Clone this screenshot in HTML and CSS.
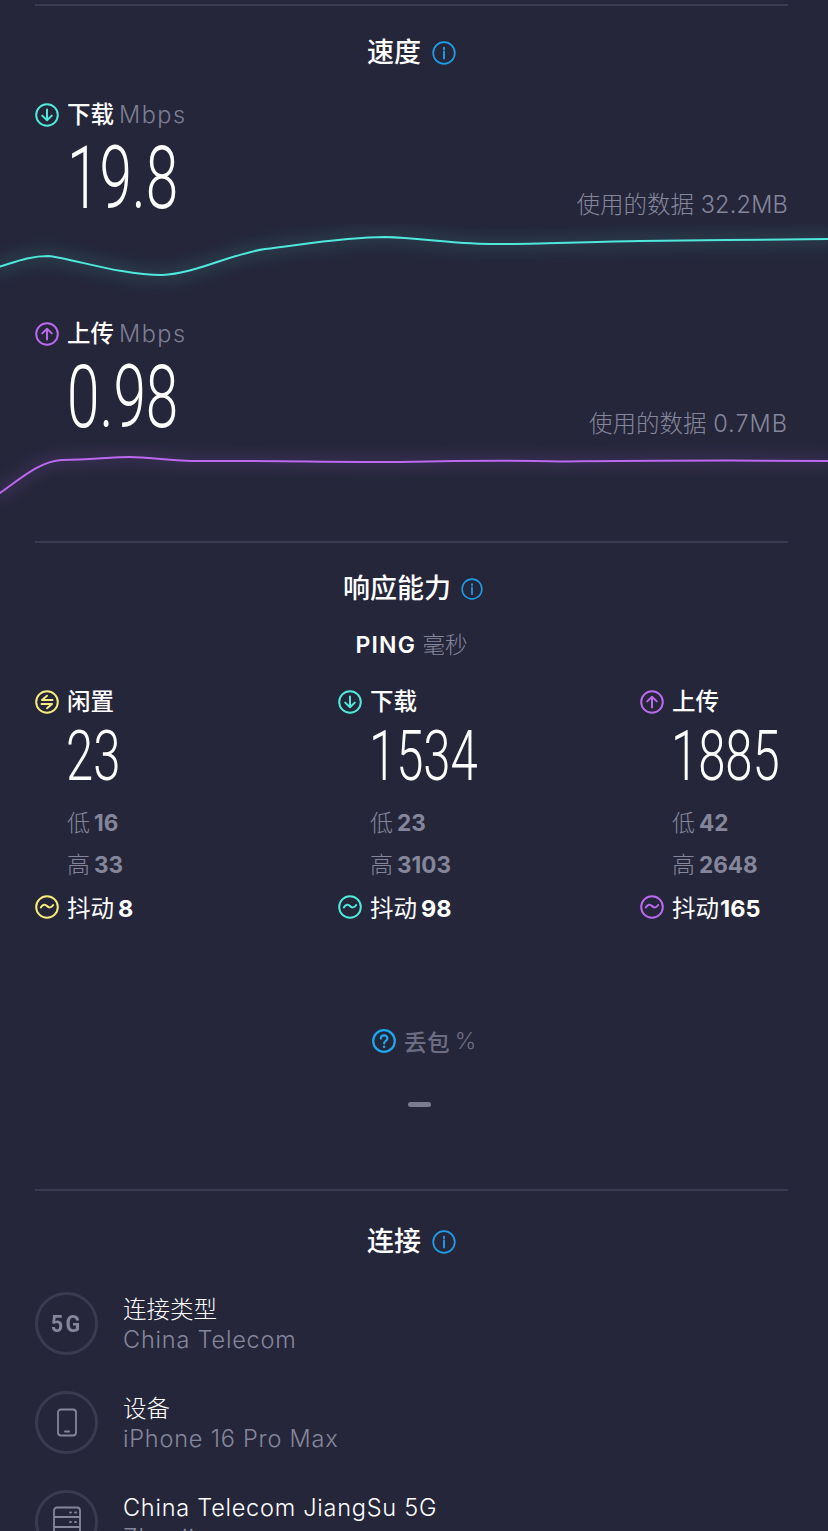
FILE: index.html
```html
<!DOCTYPE html>
<html lang="zh">
<head>
<meta charset="utf-8">
<title>速度</title>
<link rel="stylesheet" href="styles.css">
</head>
<body>
<main class="page">
  <section class="speed">
    <hr class="rule">
    <h2 class="title"><span>速度</span>
      <svg class="ico" viewBox="0 0 24 24"><circle cx="12" cy="12" r="10.800" class="s-blue"/><path d="M12 10.500v7M12 6.600v1.600" class="s-blue t"/></svg>
    </h2>
    <div class="metric">
      <div class="label">
        <svg class="ico" viewBox="0 0 24 24"><circle cx="12" cy="12" r="10.800" class="s-cyan"/><path d="M12 6.500v10.500M7.200 12.600 12 17.200l4.800-4.600" class="s-cyan"/></svg>
        <b>下载</b><span class="unit">Mbps</span>
      </div>
      <div class="figure-row">
        <div class="big"><span>19.8</span></div>
        <div class="used">使用的数据 <span class="lat">32.2MB</span></div>
      </div>
    </div>
    <svg class="chart" viewBox="0 0 828 70" preserveAspectRatio="none">
      <defs>
        <filter id="glow" x="-5%" y="-100%" width="110%" height="300%"><feGaussianBlur stdDeviation="7"/></filter>
      </defs>
      <path class="glow-c" filter="url(#glow)" d="M0 42.500C15 38 30 32 48 32C75 35 120 51 162 51C195 50 230 30 265 25C300 21 345 13 385 13C420 14 450 19.500 490 20C540 20.500 590 17.500 640 17C700 16.500 770 15.500 828 15"/>
      <path class="line-c" d="M0 42.500C15 38 30 32 48 32C75 35 120 51 162 51C195 50 230 30 265 25C300 21 345 13 385 13C420 14 450 19.500 490 20C540 20.500 590 17.500 640 17C700 16.500 770 15.500 828 15"/>
    </svg>
    <div class="metric metric-up">
      <div class="label">
        <svg class="ico" viewBox="0 0 24 24"><circle cx="12" cy="12" r="10.800" class="s-purple"/><path d="M12 17.500V7M7.200 11.400 12 6.800l4.800 4.600" class="s-purple"/></svg>
        <b>上传</b><span class="unit">Mbps</span>
      </div>
      <div class="figure-row">
        <div class="big"><span>0.98</span></div>
        <div class="used">使用的数据 <span class="lat lat-wide">0.7MB</span></div>
      </div>
    </div>
    <svg class="chart" viewBox="0 0 828 70" preserveAspectRatio="none">
      <path class="glow-p" filter="url(#glow)" d="M0 50C20 36 40 18 62 17C90 17 110 14 130 14C150 14 170 18 200 18C260 17.500 330 19 400 19C450 18 500 17 560 18.500C620 18 700 17 828 18"/>
      <path class="line-p" d="M0 50C20 36 40 18 62 17C90 17 110 14 130 14C150 14 170 18 200 18C260 17.500 330 19 400 19C450 18 500 17 560 18.500C620 18 700 17 828 18"/>
    </svg>
  </section>

  <section class="response">
    <hr class="rule">
    <h2 class="title title-sm"><span>响应能力</span>
      <svg class="ico ico-sm" viewBox="0 0 24 24"><circle cx="12" cy="12" r="10.800" class="s-blue"/><path d="M12 10.500v7M12 6.600v1.600" class="s-blue t"/></svg>
    </h2>
    <div class="ping"><b>PING</b> <span>毫秒</span></div>
    <div class="cols">
      <div class="col">
        <div class="label">
          <svg class="ico" viewBox="0 0 24 24"><circle cx="12" cy="12" r="10.800" class="s-yellow"/><path d="M17.500 10H7l5-4.300M6.500 14H17l-5 4.300" class="s-yellow"/></svg>
          <b>闲置</b>
        </div>
        <div class="mid"><span>23</span></div>
        <div class="stat">低<b>16</b></div>
        <div class="stat">高<b>33</b></div>
        <div class="jitter">
          <svg class="ico" viewBox="0 0 24 24"><circle cx="12" cy="12" r="10.800" class="s-yellow"/><path d="M5.800 12.500c2-3.500 4.500-3.500 6.200-1.500s4.200 2 6.200-1" class="s-yellow"/></svg>
          <span>抖动<b>8</b></span>
        </div>
      </div>
      <div class="col">
        <div class="label">
          <svg class="ico" viewBox="0 0 24 24"><circle cx="12" cy="12" r="10.800" class="s-cyan"/><path d="M12 6.500v10.500M7.200 12.600 12 17.200l4.800-4.600" class="s-cyan"/></svg>
          <b>下载</b>
        </div>
        <div class="mid"><span>1534</span></div>
        <div class="stat">低<b>23</b></div>
        <div class="stat">高<b>3103</b></div>
        <div class="jitter">
          <svg class="ico" viewBox="0 0 24 24"><circle cx="12" cy="12" r="10.800" class="s-cyan"/><path d="M5.800 12.500c2-3.500 4.500-3.500 6.200-1.500s4.200 2 6.200-1" class="s-cyan"/></svg>
          <span>抖动<b>98</b></span>
        </div>
      </div>
      <div class="col">
        <div class="label">
          <svg class="ico" viewBox="0 0 24 24"><circle cx="12" cy="12" r="10.800" class="s-purple"/><path d="M12 17.500V7M7.200 11.400 12 6.800l4.800 4.600" class="s-purple"/></svg>
          <b>上传</b>
        </div>
        <div class="mid"><span>1885</span></div>
        <div class="stat">低<b>42</b></div>
        <div class="stat">高<b>2648</b></div>
        <div class="jitter">
          <svg class="ico" viewBox="0 0 24 24"><circle cx="12" cy="12" r="10.800" class="s-purple"/><path d="M5.800 12.500c2-3.500 4.500-3.500 6.200-1.500s4.200 2 6.200-1" class="s-purple"/></svg>
          <span>抖动<b class="tight">165</b></span>
        </div>
      </div>
    </div>
    <div class="loss">
      <svg class="ico" viewBox="0 0 24 24"><circle cx="12" cy="12" r="10.800" class="s-sky"/><path d="M8.800 9.600c0-4.300 6.600-4.300 6.600-.2 0 2.500-3.300 2.500-3.300 5" class="s-sky"/><circle cx="12.100" cy="17.800" r="1.300" class="f-sky"/></svg>
      <b>丢包</b><span>%</span>
    </div>
    <div class="dash"></div>
  </section>

  <section class="connection">
    <hr class="rule">
    <h2 class="title"><span>连接</span>
      <svg class="ico" viewBox="0 0 24 24"><circle cx="12" cy="12" r="10.800" class="s-blue"/><path d="M12 10.500v7M12 6.600v1.600" class="s-blue t"/></svg>
    </h2>
    <ul class="links">
      <li class="link">
        <div class="ring"><span class="fiveg">5G</span></div>
        <div class="info"><div class="name">连接类型</div><div class="sub">China Telecom</div></div>
      </li>
      <li class="link">
        <div class="ring">
          <svg class="dev" viewBox="0 0 28 34"><rect x="5" y="3.500" width="18" height="26" rx="3" class="s-gray"/><path d="M12 25.500h4" class="s-gray"/></svg>
        </div>
        <div class="info"><div class="name">设备</div><div class="sub">iPhone 16 Pro Max</div></div>
      </li>
      <li class="link">
        <div class="ring">
          <svg class="dev" viewBox="0 0 28 34"><path d="M1 5.500a3 3 0 0 1 3-3h20a3 3 0 0 1 3 3v28H1zM1 12h26M1 22h26" class="s-gray"/><path d="M17 7.500h1M22 7.500h1M17 17h1M22 17h1" class="s-gray"/></svg>
        </div>
        <div class="info"><div class="name name-lat">China Telecom JiangSu 5G</div><div class="sub">Zhenjiang</div></div>
      </li>
    </ul>
  </section>
</main>
</body>
</html>
```
FILE: styles.css
```css
* { box-sizing: border-box; }
html, body { margin: 0; height: 1531px; overflow: hidden; }
body {
  background: #25263a;
  color: #fff;
  font-family: Inter, "Noto Sans CJK SC", sans-serif;
}
.page { height: 1531px; overflow: hidden; }
section { display: block; }
.rule {
  margin: 0 40px 0 35px;
  height: 2px;
  border: 0;
  background: #3a3b50;
}
.speed { padding-top: 4px; height: 541px; }
.response { height: 648px; }
.title {
  margin: 0;
  padding: 33px 40px 0 35px;
  height: 60px;
  display: flex;
  justify-content: center;
  align-items: center;
  gap: 11px;
  font-size: 27px;
  line-height: 36px;
  font-weight: 500;
}
.title-sm { padding: 31px 40px 0 38px; gap: 10px; }
.ico { width: 24px; height: 24px; flex: none; display: block; }
.ico-sm { width: 22px; height: 22px; }
svg circle, svg path, svg rect { fill: none; stroke-width: 2; stroke-linecap: round; stroke-linejoin: round; }
.s-blue { stroke: #1f9ee8; stroke-width: 1.700; }
.t { stroke-width: 1.900; }
.s-cyan { stroke: #4fe9dc; }
.s-purple { stroke: #bb69ee; }
.s-yellow { stroke: #f6ec7c; }
.s-sky { stroke: #1fa6ee; stroke-width: 2.200; }
circle.f-sky { fill: #1fa6ee; stroke: none; }
.s-gray { stroke: #85869c; stroke-width: 1.800; }

.metric { padding: 37px 40px 0 35px; height: 158px; }
.metric-up { height: 149px; padding-top: 28px; }
.label { display: flex; align-items: center; height: 24px; font-size: 24px; line-height: 24px; }
.label b { margin-left: 8px; font-weight: 500; font-size: 23.500px; }
.unit { margin-left: 5px; color: #7d7e94; font-weight: 300; font-size: 23.500px; letter-spacing: 1.500px; }
.figure-row { display: flex; justify-content: space-between; align-items: flex-end; padding-left: 32px; height: 97px; }
.big, .mid { font-family: Roboto, sans-serif; font-weight: 300; white-space: nowrap; }
.big { width: 110px; }
.big span, .mid span { display: inline-block; transform-origin: 0 50%; }
.big span { font-size: 87px; line-height: 92px; transform: scaleX(.672); }
.used { color: #85869c; font-size: 23.500px; line-height: 30px; font-weight: 300; padding-bottom: 4px; }
.lat { letter-spacing: .2px; }
.lat-wide { letter-spacing: 1px; }

.chart { display: block; width: 828px; height: 70px; }
.chart path { stroke-width: 2; }
.line-c { stroke: #4fe9dc; }
.glow-c { stroke: #4fe9dc; opacity: .1; stroke-width: 16 !important; }
.line-p { stroke: #bb69ee; }
.glow-p { stroke: #bb69ee; opacity: .1; stroke-width: 16 !important; }

.ping { text-align: center; padding: 0 40px 0 35px; margin-top: 27px; font-size: 23px; line-height: 30px; }
.ping b { font-weight: 600; letter-spacing: 1.200px; }
.ping span { color: #85869c; font-weight: 300; font-size: 22.500px; }
.cols { display: grid; grid-template-columns: 303px 302px 1fr; padding: 0 40px 0 35px; margin-top: 30px; }
.mid { padding-left: 31px; height: 60px; margin: 12px 0 16px; }
.mid span { font-size: 71px; line-height: 60px; transform: scaleX(.69); }
.stat { padding-left: 32px; height: 42px; line-height: 42px; font-size: 23px; color: #85869c; font-weight: 300; }
.stat b { font-weight: 700; margin-left: 4px; font-size: 22.500px; }
.jitter { display: flex; align-items: center; gap: 8px; height: 42px; font-size: 23.500px; }
.jitter span { font-weight: 400; }
.jitter b { font-weight: 700; margin-left: 4px; }
.jitter .tight { margin-left: 1px; }
.loss {
  display: flex; justify-content: center; align-items: center; gap: 8px;
  margin-top: 98px; padding: 0 40px 0 60px; height: 30px; font-size: 23px; color: #6c6d82;
}
.loss b { font-weight: 500; }
.loss span { font-weight: 300; margin-left: -3px; }
.dash { width: 23px; height: 5px; border-radius: 3px; background: #7b7c90; margin: 46px 0 0 408px; }

.connection .title { padding-top: 37px; height: 64px; margin-bottom: 37px; }
.links { list-style: none; margin: 0; padding: 0 40px 0 35px; }
.link { display: flex; align-items: center; gap: 25px; height: 63px; margin-bottom: 36px; }
.ring { width: 63px; height: 63px; border-radius: 50%; border: 3px solid #3a3b50; display: flex; align-items: center; justify-content: center; flex: none; overflow: hidden; }
.fiveg { font-family: Roboto, sans-serif; font-weight: 700; color: #85869c; font-size: 24px; letter-spacing: 2.500px; display: inline-block; transform: scaleX(.9); }
.dev { width: 28px; height: 34px; }
.info { padding-top: 2px; line-height: 30px; font-size: 23.500px; font-weight: 300; }
.name { color: #fff; }
.name-lat { letter-spacing: .75px; }
.sub { color: #85869c; letter-spacing: .8px; }
```
